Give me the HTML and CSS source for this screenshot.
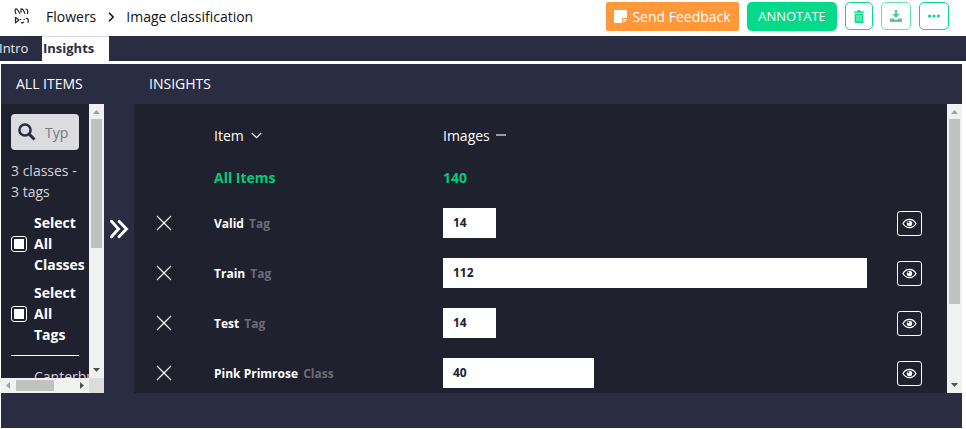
FILE: index.html
```html
<!DOCTYPE html>
<html lang="en">
<head>
<meta charset="utf-8">
<title>Flowers - Image classification</title>
<link rel="stylesheet" href="styles.css">
</head>
<body>
<svg class="defs" width="0" height="0" aria-hidden="true">
  <symbol id="cross" viewBox="0 0 16 16"><path d="M1 1l14 14M15 1L1 15" fill="none" stroke="#fff" stroke-width="1.1"/></symbol>
  <symbol id="eye" viewBox="0 0 15 11"><path d="M1 5.500C4 0 11 0 14 5.500C11 11 4 11 1 5.500z" fill="none" stroke="#fff" stroke-width="1.200"/><circle cx="7.500" cy="5.500" r="2.700" fill="#fff"/><circle cx="6.400" cy="4.300" r=".9" fill="#20212e"/></symbol>
</svg>
<header class="topbar">
  <svg class="logo" width="16" height="17" viewBox="0 0 16 17" fill="none" stroke="#222" stroke-width="1.200"><path d="M2.200 6C.5 4 1 .8 2.200.8S4.500 3 6 5.800M7 4.500V1C8.500 0 9.800 2.500 11 5.800M11.500 1c2.500 0 2.500 3 1.800 5M1.500 9.500L5 12l-3.500 2.800M1.500 9v6.500M6 11.500h1.200M9.500 11.500h1.200M7 14.200l1.200.8 1.800-1M12 10.500c2-.5 3 1.500 1.800 4.200"/></svg>
  <nav class="crumbs">
    <span>Flowers</span>
    <svg width="8" height="10" viewBox="0 0 8 10"><path d="M2 .7L6.200 5 2 9.300" fill="none" stroke="#111" stroke-width="1.500"/></svg>
    <span>Image classification</span>
  </nav>
  <div class="actions">
    <button class="btn feedback"><svg width="13" height="13" viewBox="0 0 13 13"><path fill="#fff" d="M1 0h11a1 1 0 0 1 1 1v7H9a1 1 0 0 0-1 1v4H1a1 1 0 0 1-1-1V1a1 1 0 0 1 1-1zM13 9.200L9.200 13V9.200z"/></svg>Send Feedback</button>
    <button class="btn annotate">ANNOTATE</button>
    <button class="btn outline trash"><svg width="10" height="13" viewBox="0 0 10 13" fill="#05d98a"><path d="M0 1.500h3L3.500.3h3L7 1.500h3v1.200H0zM.7 3.700h8.600V12q0 1-1 1H1.700q-1 0-1-1z"/><path d="M3 5v6.500M5 5v6.500M7 5v6.500" stroke="#fff" stroke-width=".7"/></svg></button>
    <button class="btn outline download"><svg width="12" height="12" viewBox="0 0 12 12"><path d="M4.800 0h2.400v4h2.600L6 8 2.200 4h2.600zM0 8.500h3.500L6 10l2.500-1.500H12V12H0z"/></svg></button>
    <button class="btn outline more"><svg width="12" height="4" viewBox="0 0 12 4" fill="#05d98a"><circle cx="1.600" cy="2" r="1.600"/><circle cx="6" cy="2" r="1.600"/><circle cx="10.400" cy="2" r="1.600"/></svg></button>
  </div>
</header>
<nav class="tabs"><span class="tab">Intro</span><span class="tab active">Insights</span></nav>
<main class="workspace">
  <section class="side">
    <h2>ALL ITEMS</h2>
    <div class="side-frame">
      <div class="side-body">
        <div class="search"><svg width="18" height="18" viewBox="0 0 18 18" fill="none" stroke="#2a2c45"><circle cx="7" cy="7" r="5.600" stroke-width="2.500"/><path d="M11 11l5.500 5.500" stroke-width="3"/></svg><span>Typ</span></div>
        <p class="summary">3 classes -<br>3 tags</p>
        <label class="pick"><i class="check"></i><b>Select<br>All<br>Classes</b></label>
        <label class="pick"><i class="check"></i><b>Select<br>All<br>Tags</b></label>
        <hr>
        <div class="entry">Canterbury Bells</div>
      </div>
      <div class="vbar"><svg width="15" height="15"><path d="M4 10h7L7.500 6z" fill="#a3a3a3"/></svg><div class="thumb"></div><svg class="end" width="15" height="15"><path d="M4 5h7L7.500 9z" fill="#505050"/></svg></div>
      <div class="hbar"><svg width="15" height="15"><path d="M9 4v7L5 7.500z" fill="#a3a3a3"/></svg><div class="thumb"></div><svg class="end" width="15" height="15"><path d="M6 4v7l4-3.500z" fill="#505050"/></svg></div>
      <div class="corner"></div>
    </div>
  </section>
  <div class="expander"><svg width="20" height="20" viewBox="0 0 20 20" fill="none" stroke="#fff" stroke-width="2.900" stroke-linecap="round"><path d="M2.500 2.200L9.500 10l-7 7.800M10 2.200l7.500 7.800-7.500 7.800"/></svg></div>
  <section class="insights">
    <h2>INSIGHTS</h2>
    <div class="table-frame">
      <div class="table">
        <div class="row head"><span></span><span class="sort">Item<svg width="11" height="7" viewBox="0 0 11 7"><path d="M.8 1l4.700 4.700L10.200 1" fill="none" stroke="#fff" stroke-width="1.200"/></svg></span><span class="sort images">Images<i class="dash"></i></span></div>
        <div class="row total"><span></span><span>All Items</span><span>140</span></div>
        <div class="row"><svg class="cross"><use href="#cross"/></svg><span class="name">Valid <em>Tag</em></span><span class="bar" style="width:53px">14</span><span class="eye"><svg><use href="#eye"/></svg></span></div>
        <div class="row"><svg class="cross"><use href="#cross"/></svg><span class="name">Train <em>Tag</em></span><span class="bar" style="width:424px">112</span><span class="eye"><svg><use href="#eye"/></svg></span></div>
        <div class="row"><svg class="cross"><use href="#cross"/></svg><span class="name">Test <em>Tag</em></span><span class="bar" style="width:53px">14</span><span class="eye"><svg><use href="#eye"/></svg></span></div>
        <div class="row"><svg class="cross"><use href="#cross"/></svg><span class="name">Pink Primrose <em>Class</em></span><span class="bar" style="width:151px">40</span><span class="eye"><svg><use href="#eye"/></svg></span></div>
      </div>
      <div class="vbar main-bar"><svg width="15" height="15"><path d="M4 10h7L7.500 6z" fill="#a3a3a3"/></svg><div class="thumb"></div><svg class="end" width="15" height="15"><path d="M4 5h7L7.500 9z" fill="#505050"/></svg></div>
    </div>
  </section>
</main>
</body>
</html>
```
FILE: styles.css
```css
* { box-sizing: border-box; }
body { margin: 0; height: 429px; overflow: hidden; background: #fff; font: 14px/21px "Open Sans", sans-serif; color: #fff; }
svg { display: block; flex: none; }
.defs { position: absolute; }
.topbar { display: flex; height: 36px; align-items: flex-start; color: #111; }
.logo { margin: 8px 0 0 14px; }
.crumbs { display: flex; align-items: center; height: 33px; margin-left: 16px; white-space: nowrap; }
.crumbs svg { margin: 0 11px; }
.actions { display: flex; align-items: flex-start; margin: 2px 17px 0 auto; }
.btn { display: flex; align-items: center; justify-content: center; height: 28px; padding: 0; border: 0; border-radius: 5px; color: #fff; font: 14px/21px "Open Sans", sans-serif; white-space: nowrap; }
.feedback { width: 133px; height: 29px; border-radius: 2px; background: #ff9838; gap: 5px; }
.annotate { width: 90px; height: 29px; margin-left: 8px; background: #05d98a; font-size: 13px; }
.outline { border: 1px solid #05d98a; background: #fff; }
.trash { width: 28px; margin-left: 8px; }
.download { width: 30px; margin-left: 8px; border-color: #5fe3b0; fill: #5cc795; }
.more { width: 30px; margin-left: 8px; }
.tabs { display: flex; height: 25px; background: #2a2c42; font-size: 13px; line-height: 25px; }
.tab { width: 42px; color: #e9e9ee; text-indent: -1px; }
.tab.active { width: 67px; padding-left: 2px; border-top: 1px solid #d5dbe6; background: #fff; color: #2a2c42; font-weight: 700; line-height: 23px; }
.workspace { display: flex; width: 961px; height: 364px; margin: 3px 0 0 1px; background: #2a2c42; }
h2 { height: 40px; margin: 0; padding-left: 15px; font-size: 14px; font-weight: 400; line-height: 40px; }
.side { width: 103px; }
.side-frame { display: grid; grid-template: 274px 15px / 88px 15px; }
.side-body { overflow: hidden; padding: 10px 0 0 10px; background: #20212e; color: #d3d3d8; }
.search { display: flex; align-items: center; gap: 9px; width: 68px; height: 36px; padding-left: 7px; border-radius: 4px; background: #dcdbe0; color: #777780; }
.summary { margin: 10px 0; white-space: nowrap; }
.pick { display: flex; align-items: center; gap: 7px; margin-bottom: 7px; color: #fff; }
.check { width: 16px; height: 16px; padding: 2px; border: 1px solid #fff; border-radius: 3px; background: #fff content-box; flex: none; }
hr { width: 68px; margin: 10px 0; border: 0; border-top: 1px solid #fff; }
.entry { padding-left: 23px; white-space: nowrap; }
.vbar { display: flex; flex-direction: column; width: 15px; background: #f1f1f1; }
.vbar .thumb { width: 11px; height: 129px; margin: 0 2px; background: #c1c1c1; }
.vbar .end { margin-top: auto; }
.hbar { display: flex; align-items: center; background: #f1f1f1; }
.hbar .thumb { width: 38px; height: 11px; background: #c1c1c1; }
.hbar .end { margin-left: auto; }
.corner { background: #dcdcdc; }
.expander { width: 30px; padding: 155px 0 0 5px; }
.insights { width: 828px; }
.table-frame { display: flex; height: 289px; }
.table { flex: 1; padding-top: 9px; overflow: hidden; background: #20212e; }
.row { display: grid; grid-template-columns: 80px 229px 454px 25px; align-items: center; height: 50px; font-size: 12px; font-weight: 700; }
.head { height: 44px; font-size: 14px; font-weight: 400; }
.total { height: 40px; margin-bottom: 1px; color: #05ca78; font-size: 14px; }
.sort { display: flex; align-items: center; gap: 7px; }
.images { gap: 6px; }
.dash { width: 10px; height: 2px; background: #9a9aa0; }
.cross { width: 16px; height: 16px; margin-left: 22px; }
.name em { margin-left: 2px; color: #6c6c77; font-style: normal; }
.bar { height: 30px; padding-left: 10px; background: #fff; color: #20212e; line-height: 30px; }
.eye { display: flex; align-items: center; justify-content: center; width: 25px; height: 25px; border: 1px solid #fff; border-radius: 3px; }
.eye svg { width: 15px; height: 11px; }
.main-bar .thumb { height: 185px; }
```
